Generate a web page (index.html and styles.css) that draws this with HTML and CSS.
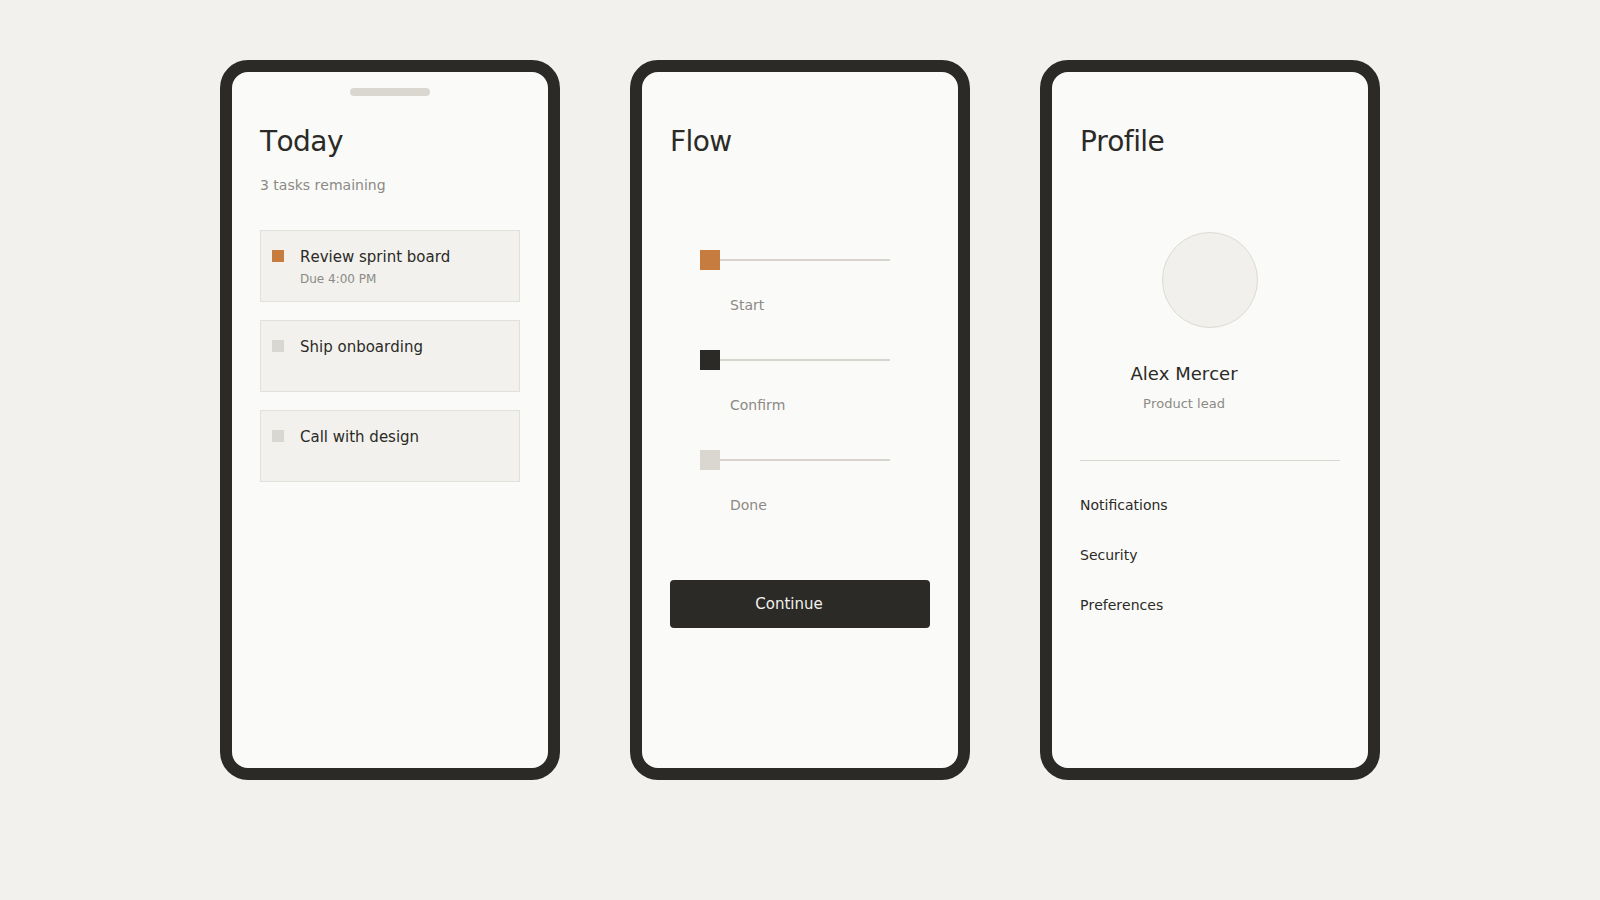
FILE: index.html
```html
<!DOCTYPE html>
<html lang="en">
<head>
<meta charset="utf-8">
<title>Mobile screens</title>
<link rel="stylesheet" href="styles.css">
</head>
<body>
<main class="stage">
  <section class="phone">
    <div class="screen">
      <div class="notch"></div>
      <h1 class="title">Today</h1>
      <p class="subtitle">3 tasks remaining</p>
      <ul class="tasks">
        <li class="task">
          <span class="task-mark mark-active"></span>
          <div class="task-body">
            <div class="task-name">Review sprint board</div>
            <div class="task-due">Due 4:00 PM</div>
          </div>
        </li>
        <li class="task">
          <span class="task-mark"></span>
          <div class="task-body">
            <div class="task-name">Ship onboarding</div>
          </div>
        </li>
        <li class="task">
          <span class="task-mark"></span>
          <div class="task-body">
            <div class="task-name">Call with design</div>
          </div>
        </li>
      </ul>
    </div>
  </section>

  <section class="phone">
    <div class="screen">
      <h1 class="title">Flow</h1>
      <ol class="steps">
        <li class="step">
          <div class="step-row"><span class="step-dot dot-orange"></span><span class="step-line"></span></div>
          <div class="step-label">Start</div>
        </li>
        <li class="step">
          <div class="step-row"><span class="step-dot dot-dark"></span><span class="step-line"></span></div>
          <div class="step-label">Confirm</div>
        </li>
        <li class="step">
          <div class="step-row"><span class="step-dot dot-light"></span><span class="step-line"></span></div>
          <div class="step-label">Done</div>
        </li>
      </ol>
      <button class="continue" type="button">Continue</button>
    </div>
  </section>

  <section class="phone">
    <div class="screen">
      <h1 class="title">Profile</h1>
      <div class="avatar"></div>
      <div class="identity">
        <div class="name">Alex Mercer</div>
        <div class="role">Product lead</div>
      </div>
      <hr class="divider">
      <ul class="menu">
        <li class="menu-item">Notifications</li>
        <li class="menu-item">Security</li>
        <li class="menu-item">Preferences</li>
      </ul>
    </div>
  </section>
</main>
</body>
</html>
```

FILE: styles.css
```css
* {
  box-sizing: border-box;
}

html, body {
  margin: 0;
  padding: 0;
}

body {
  background: #f2f1ed;
  font-family: "DejaVu Sans", "Liberation Sans", sans-serif;
  font-kerning: none;
  color: #2b2a26;
  width: 1600px;
  height: 900px;
  overflow: hidden;
}

.stage {
  display: flex;
  justify-content: center;
  align-items: flex-start;
  gap: 70px;
  padding-top: 60px;
}

.phone {
  width: 340px;
  height: 720px;
  border: 12px solid #2b2a26;
  border-radius: 28px;
  background: #fafaf8;
  overflow: hidden;
}

.screen {
  position: relative;
  height: 100%;
  padding: 53px 28px 28px;
  display: flex;
  flex-direction: column;
}

.notch {
  position: absolute;
  top: 16px;
  left: 50%;
  width: 80px;
  height: 8px;
  margin-left: -40px;
  border-radius: 4px;
  background: #d9d7d0;
}

.title {
  margin: 0;
  font-size: 28px;
  line-height: 34px;
  font-weight: normal;
  letter-spacing: -0.02em;
  color: #2b2a26;
}

.subtitle {
  margin: 17px 0 0;
  font-size: 14px;
  line-height: 18px;
  color: #8c8a84;
}

/* Tasks */
.tasks {
  list-style: none;
  margin: 36px 0 0;
  padding: 0;
  display: flex;
  flex-direction: column;
  gap: 18px;
}

.task {
  height: 72px;
  display: flex;
  align-items: flex-start;
  gap: 16px;
  padding: 17px 12px 0 11px;
  background: #f2f1ed;
  border: 1px solid #e2e0da;
}

.task-mark {
  flex: none;
  width: 12px;
  height: 12px;
  margin-top: 2px;
  background: #d9d7d1;
}

.mark-active {
  background: #c67c3f;
}

.task-name {
  font-size: 15px;
  line-height: 18px;
  color: #2b2a26;
}

.task-due {
  margin-top: 5px;
  font-size: 12px;
  line-height: 16px;
  color: #8c8a84;
}

/* Steps */
.steps {
  list-style: none;
  margin: 91px 0 0;
  padding: 0 40px 0 30px;
  display: flex;
  flex-direction: column;
  gap: 36px;
}

.step-row {
  display: flex;
  align-items: center;
  height: 20px;
}

.step-dot {
  flex: none;
  width: 20px;
  height: 20px;
}

.dot-orange { background: #c67c3f; }
.dot-dark { background: #2b2a26; }
.dot-light { background: #d9d7d0; }

.step-line {
  flex: 1;
  height: 2px;
  background: #d6d4cd;
}

.step-label {
  margin: 26px 0 0 30px;
  font-size: 14px;
  line-height: 18px;
  color: #8c8a84;
}

.continue {
  margin-top: 66px;
  height: 48px;
  width: 100%;
  border: none;
  border-radius: 4px;
  background: #2b2a26;
  color: #f2f1ed;
  font-family: inherit;
  font-kerning: none;
  font-size: 15px;
  padding: 0 22px 0 0;
  text-align: center;
}

/* Profile */
.avatar {
  align-self: center;
  width: 96px;
  height: 96px;
  margin-top: 73px;
  border-radius: 50%;
  background: #f1f0ec;
  border: 1px solid #dcdad3;
}

.identity {
  margin-top: 35px;
  padding-right: 52px;
  text-align: center;
}

.name {
  font-size: 18px;
  line-height: 22px;
  color: #2b2a26;
}

.role {
  margin-top: 11px;
  font-size: 13px;
  line-height: 16px;
  color: #8c8a84;
}

.divider {
  margin: 48px 0 0;
  border: none;
  height: 1px;
  background: #d9d7d0;
}

.menu {
  list-style: none;
  margin: 19px 0 0;
  padding: 0;
}

.menu-item {
  padding: 16px 0;
  font-size: 14px;
  line-height: 18px;
  color: #2b2a26;
}
```
